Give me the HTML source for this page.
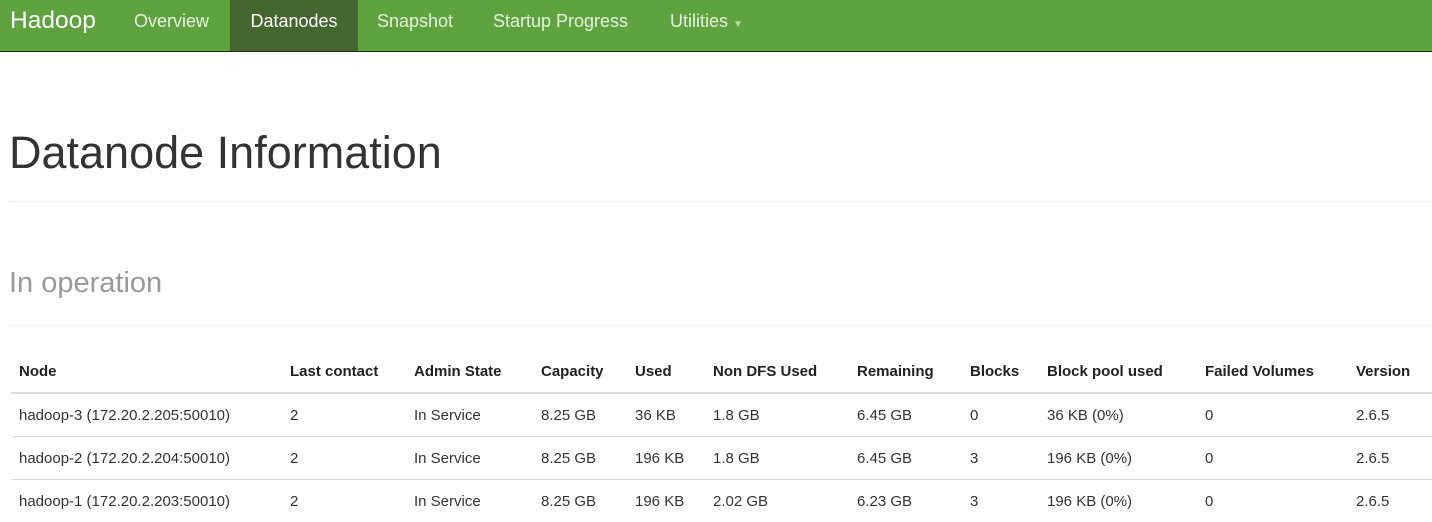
<!DOCTYPE html>
<html><head><meta charset="utf-8"><style>
body{margin:0;font-family:"Liberation Sans",sans-serif;color:#333;background:#fff;width:1432px;height:518px;overflow:hidden;position:relative}
.nav{position:absolute;left:0;top:0;width:1432px;height:51px;background:#5fa33e;border-bottom:1px solid #1e2a18}
.nav span{position:absolute;top:0;height:51px;line-height:42px;font-size:18px;color:#e8f2e2}
.brand{left:10px;font-size:24.5px!important;color:#fff!important}
.act{background:#43672f;color:#fff!important}
.h1{position:absolute;left:9px;top:127px;font-size:45px;color:#333;white-space:nowrap}
.hr{position:absolute;left:9px;right:0;height:1px;background:#eee}
.h2{position:absolute;left:9px;top:267px;font-size:29px;color:#999}
table{position:absolute;left:11px;top:351px;border-collapse:collapse;font-size:15px}
td,th{padding:0 8px;text-align:left;height:42px;white-space:nowrap;vertical-align:middle}
th{font-weight:bold;color:#222;border-bottom:2px solid #ddd;height:41px}
tr.r td{border-bottom:1px solid #ddd}
</style></head><body>
<div class="nav">
<span class="brand">Hadoop</span>
<span style="left:134px">Overview</span>
<span class="act" style="left:230px;width:128px;text-align:center">Datanodes</span>
<span style="left:377px">Snapshot</span>
<span style="left:493px">Startup Progress</span>
<span style="left:670px">Utilities <span style="position:static;font-size:10px;color:#b9d6aa">▼</span></span>
</div>
<div class="h1">Datanode Information</div>
<div class="hr" style="top:201px"></div>
<div class="h2">In operation</div>
<div class="hr" style="top:325px"></div>
<table>
<tr><th style="width:255px">Node</th><th style="width:108px">Last contact</th><th style="width:111px">Admin State</th><th style="width:78px">Capacity</th><th style="width:62px">Used</th><th style="width:128px">Non DFS Used</th><th style="width:97px">Remaining</th><th style="width:61px">Blocks</th><th style="width:142px">Block pool used</th><th style="width:135px">Failed Volumes</th><th style="width:68px">Version</th></tr>
<tr class="r"><td>hadoop-3 (172.20.2.205:50010)</td><td>2</td><td>In Service</td><td>8.25 GB</td><td>36 KB</td><td>1.8 GB</td><td>6.45 GB</td><td>0</td><td>36 KB (0%)</td><td>0</td><td>2.6.5</td></tr>
<tr class="r"><td>hadoop-2 (172.20.2.204:50010)</td><td>2</td><td>In Service</td><td>8.25 GB</td><td>196 KB</td><td>1.8 GB</td><td>6.45 GB</td><td>3</td><td>196 KB (0%)</td><td>0</td><td>2.6.5</td></tr>
<tr><td>hadoop-1 (172.20.2.203:50010)</td><td>2</td><td>In Service</td><td>8.25 GB</td><td>196 KB</td><td>2.02 GB</td><td>6.23 GB</td><td>3</td><td>196 KB (0%)</td><td>0</td><td>2.6.5</td></tr>
</table>
</body></html>
